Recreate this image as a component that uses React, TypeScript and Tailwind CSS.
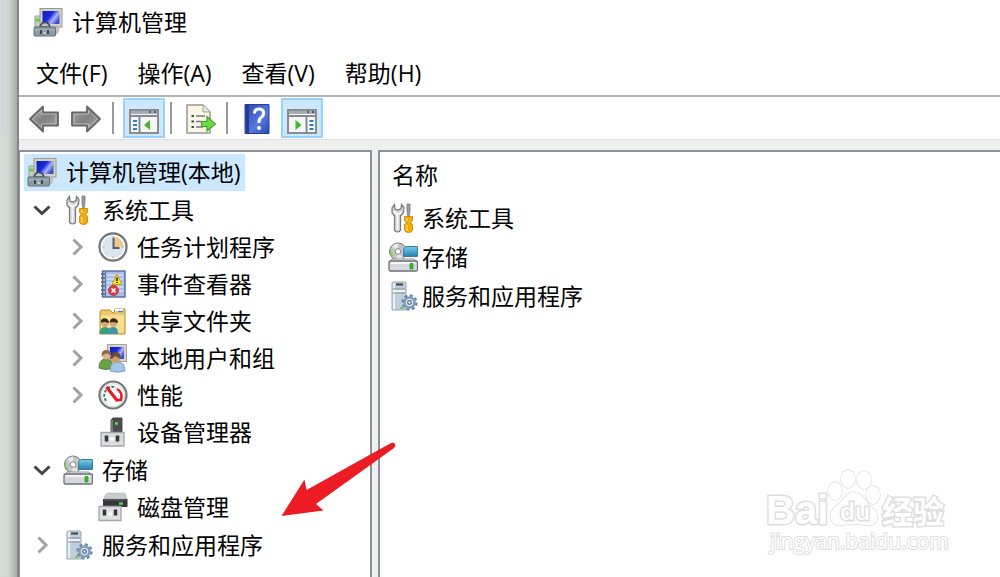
import type { ReactNode } from "react";

function Icon({ children, className = "w-[30px] h-[30px]" }: { children: ReactNode; className?: string }) {
	return (
		<svg viewBox="0 0 30 30" className={`shrink-0 ${className}`} aria-hidden="true">
			{children}
		</svg>
	);
}

function ComputerIcon() {
	return (
		<Icon>
			<defs>
				<linearGradient id="screen" x1="0" y1="0" x2="1" y2="0.6">
					<stop offset="0" stopColor="#0a1fb0" />
					<stop offset="0.5" stopColor="#1c2be0" />
					<stop offset="0.75" stopColor="#a9b8f2" />
					<stop offset="1" stopColor="#3c4ed6" />
				</linearGradient>
			</defs>
			<path d="M2 9h6v11H2z" fill="#c9ccca" stroke="#9b9f9e" />
			<path d="M2.500 13h4" stroke="#43d82e" strokeWidth="2.500" />
			<rect x="7" y="1.500" width="22" height="18.500" fill="#d6d1c4" stroke="#9d998e" />
			<rect x="9.500" y="4" width="17" height="13" fill="url(#screen)" />
			<path d="M20 20h7l-2 7h-5z" fill="#c2c0b8" />
			<path d="M7 20q1-4.500 5-4.500t5 4.500z" fill="#b9c4ca" stroke="#3e484d" strokeWidth="1.600" />
			<rect x="1" y="20" width="21.500" height="9" rx="1" fill="#8b9ba4" stroke="#63727a" />
			<path d="M1.500 23h20.500" stroke="#b0bec6" />
			<path d="M8 23v4M15 23v4" stroke="#333f45" strokeWidth="1.800" />
			<path d="M10.500 26h2.500" stroke="#d3dde2" strokeWidth="1.500" />
		</Icon>
	);
}

function ToolsIcon() {
	return (
		<Icon>
			<g transform="translate(2 0)">
				<path
					d="M4.500 1.500 5 6l3 1 3-1.500.500-4 2.500 3-.500 5-3 3.500v14q-.500 2-3 2t-3-2V13L2 10V5z"
					fill="#d5d6d7"
					stroke="#75777a"
					strokeWidth="1.200"
				/>
				<path d="M3.500 8.500l4 3 4-2M7.500 12v15" stroke="#f8f8f8" strokeWidth="1.800" fill="none" />
				<path d="M17 1h3v7l-1 6h-1l-1-6z" fill="#9b9da0" stroke="#686a6c" strokeWidth=".7" />
				<path d="M14.500 13.500h8v4l-2 2 2 2v6q-1 2-4 2t-4-2v-6l2-2-2-2z" fill="#f2aa08" stroke="#c48208" strokeWidth=".8" />
				<path d="M17 15v3m0 4v6" stroke="#ffd95b" strokeWidth="1.500" />
			</g>
		</Icon>
	);
}

function ClockIcon() {
	return (
		<Icon>
			<circle cx="15" cy="15" r="13.500" fill="#dae6f0" stroke="#77797b" strokeWidth="2.400" />
			<circle cx="15" cy="15" r="11.500" fill="none" stroke="#fff" strokeWidth="1.500" />
			<path d="M15 15V4.500A10.500 10.500 0 0 1 25.500 15z" fill="#eacb82" />
			<path d="M15.500 6v10h6" fill="none" stroke="#52606d" strokeWidth="2" />
			<path d="M15 4v2M4.500 15h2M15 24v2M24 15h2M7.500 7.500l1 1M7.500 22.500l1-1M22.500 22.500l-1-1" stroke="#a5b1bb" />
		</Icon>
	);
}

function EventIcon() {
	return (
		<Icon>
			<rect x="4.500" y="2" width="22.500" height="26" fill="#a9bfe9" stroke="#4b619b" strokeWidth="1.300" />
			<path d="M9 6h16M9 10h16M9 14h16M9 18h16M9 22h16" stroke="#d6e2f8" strokeWidth="1.500" />
			<path d="M7.500 2v26" stroke="#5f73a5" />
			<path d="M3 5h4M3 9h4M3 13h4M3 17h4M3 21h4M3 25h4" stroke="#62676f" strokeWidth="1.600" />
			<path d="M19 5 24 15.500H14z" fill="#ffe51c" stroke="#c2a004" strokeWidth="1" />
			<path d="M19 8.500v3.500m0 1v1" stroke="#222" strokeWidth="1.600" />
			<circle cx="15.500" cy="21.500" r="5" fill="#dc3b45" stroke="#b8404b" />
			<path d="m13.500 19.500 4 4m0-4-4 4" stroke="#fff" strokeWidth="1.600" />
		</Icon>
	);
}

function SharedFolderIcon() {
	return (
		<Icon>
			<path d="M2 6q0-2 2-2h8l3 3h1l1-4h10v25H2z" fill="#ecc966" stroke="#b88d30" />
			<path d="M17 4h8" stroke="#fff" strokeWidth="2" />
			<path d="M20 5.500h5" stroke="#438ddd" strokeWidth="1.500" />
			<path d="M3 9h23v18H3z" fill="#f7df91" />
			<path d="M1.500 28q0-7 5.500-7t6 7z" fill="#35a177" />
			<path d="M9.500 28q0-7 5.500-7t5 7z" fill="#3f98ae" />
			<circle cx="7" cy="17.500" r="3.500" fill="#d8a67c" />
			<circle cx="15.500" cy="17.500" r="3.500" fill="#d8a67c" />
			<path d="M2.500 16.500q1-5 5.500-4 3 1 3 4.500l-4-1zM11.500 16.500q1-5 5.500-4 3 1 3 4.500l-5-1z" fill="#33251a" />
		</Icon>
	);
}

function UsersIcon() {
	return (
		<Icon>
			<rect x="9.500" y="1.500" width="19" height="17" fill="#d6d1c4" stroke="#aaa69b" />
			<rect x="12" y="4" width="14" height="12" fill="url(#screen)" />
			<path d="M1 25q0-9 7-9t7 9q-7 3-14 0z" fill="#68a348" stroke="#47792d" strokeWidth=".8" />
			<circle cx="8.500" cy="12" r="4.500" fill="#ddb184" />
			<path d="M3.500 13q0-7 5.500-6 5 1 4 6l-4-3z" fill="#8b6a45" />
			<path d="M12 28q0-9 7.500-9t7.500 9q-7 2.500-15 0z" fill="#a4c6e9" stroke="#6c94bd" strokeWidth=".8" />
			<circle cx="17.500" cy="15.500" r="4.500" fill="#d19b6b" />
			<path d="M13 16q-1-6 4.500-7 6 0 5 7l-5-3z" fill="#6b4c35" />
		</Icon>
	);
}

function PerformanceIcon() {
	return (
		<Icon>
			<circle cx="15" cy="15" r="13.500" fill="#fafafa" stroke="#747678" strokeWidth="2.200" />
			<circle cx="15" cy="15" r="11.500" fill="none" stroke="#d7dadb" />
			<path d="M8 21q-4-7 1-12 4-4 9-1" fill="none" stroke="#527966" strokeWidth="2" strokeDasharray="3 1.500" />
			<path d="M19 9q6 3 4 11h-4" fill="none" stroke="#df2028" strokeWidth="2.500" />
			<path d="m8.500 7 11 14" stroke="#e31820" strokeWidth="3" />
		</Icon>
	);
}

function DeviceIcon() {
	return (
		<Icon>
			<path d="m13 3 2-2h9v14H13z" fill="#4b4d50" stroke="#333" strokeWidth=".8" />
			<path d="M14 3v12" stroke="#85888b" strokeWidth="1.500" />
			<path d="M17 6.500h3" stroke="#42ed48" strokeWidth="2.500" />
			<path d="M3 15.500h23v13.500H3z" fill="#dadcdf" stroke="#a3a6aa" strokeWidth="1.300" />
			<path d="M8.500 18.500v6M19.500 18.500v6" stroke="#353637" strokeWidth="3.500" />
			<path d="M12 22h4" stroke="#fff" strokeWidth="3" />
		</Icon>
	);
}

function DiskIcon() {
	return (
		<Icon>
			<path d="m8 2 2-1h17l2 6H6z" fill="#c9ccce" stroke="#b2b5b8" strokeWidth=".6" />
			<path d="M5 7h24.500v8H5z" fill="#343638" />
			<path d="M6 8h22" stroke="#66696c" />
			<path d="M21 11.500h4" stroke="#3cdb42" strokeWidth="2.500" />
			<path d="M1 14.500h22v14H1z" fill="#dfe0e1" stroke="#a3a6aa" strokeWidth="1.300" />
			<path d="M6.500 17.500v6M17.500 17.500v6" stroke="#343638" strokeWidth="3.500" />
			<path d="M10 22h4" stroke="#fff" strokeWidth="3" />
		</Icon>
	);
}

function StorageIcon() {
	return (
		<Icon>
			<defs>
				<linearGradient id="drive" x1="0" y1="0" x2="0" y2="1">
					<stop stopColor="#77cdee" />
					<stop offset="1" stopColor="#237fae" />
				</linearGradient>
			</defs>
			<circle cx="10" cy="9.500" r="8.500" fill="#c3c5c6" stroke="#77797b" />
			<path d="m10 9.500-6-5q3-3 6-3zM10 9.500l5 7q-3 2-6 1z" fill="#e6e9ea" />
			<circle cx="10" cy="9.500" r="2.800" fill="#fff" stroke="#85888a" />
			<path d="M3 8q-1 4 2 6" stroke="#83d14d" fill="none" strokeWidth="1.500" />
			<path d="m18 4.500h11.500v10H15.500V7z" fill="url(#drive)" stroke="#417b99" />
			<path d="M4 17h22l3 4H1z" fill="#eeeef1" stroke="#808288" strokeWidth=".8" />
			<rect x="1" y="19" width="28.500" height="10" rx="1.500" fill="#d8d8df" stroke="#6e7078" strokeWidth="1.300" />
			<path d="M3 21h24" stroke="#fff" strokeWidth="1.500" />
			<path d="M22 21.500h3v5.500h-3z" fill="#39bd24" stroke="#247c1b" strokeWidth=".6" />
		</Icon>
	);
}

function ServicesIcon() {
	return (
		<Icon>
			<path d="M4 2q0-1 2-1h10q2 0 2 1v27H4z" fill="#bfcfdb" stroke="#9aabb7" />
			<path d="M6 2v26" stroke="#e9f2f7" strokeWidth="2" />
			<path d="M8 3.500h7" stroke="#34424c" strokeWidth="2" />
			<path d="M5 8h12M5 12h12" stroke="#82949f" />
			<path d="M5 10h12" stroke="#fff" strokeWidth="1.500" />
			<circle cx="21.500" cy="21.500" r="6.800" fill="none" stroke="#6d8ba8" strokeWidth="2.800" strokeDasharray="3 2.340" />
			<circle cx="21.500" cy="21.500" r="5" fill="#d8e7f2" stroke="#7d9dba" strokeWidth="2.500" />
			<circle cx="21.500" cy="21.500" r="1.800" fill="#fff" stroke="#536e86" strokeWidth="1.300" />
			<path d="M12 27h3" stroke="#6dcd45" strokeWidth="2" />
		</Icon>
	);
}

function Arrow({ flip = false }: { flip?: boolean }) {
	return (
		<Icon className={flip ? "w-[30px] h-[30px] rotate-180" : "w-[30px] h-[30px]"}>
			<defs>
				<linearGradient id="steel" x1="0" y1="0" x2="1" y2="1">
					<stop stopColor="#b4b4b4" />
					<stop offset=".5" stopColor="#818181" />
					<stop offset="1" stopColor="#a9a9a9" />
				</linearGradient>
			</defs>
			<path d="m1 15 13-12.500v6h15v13H14v6z" fill="url(#steel)" stroke="#666" strokeWidth="1.800" strokeLinejoin="round" />
			<path d="m3.500 15 9-8.500V10H27v10H12.500v3.500z" fill="none" stroke="#c1c1c1" strokeWidth=".8" />
		</Icon>
	);
}

function PanelIcon({ right = false }: { right?: boolean }) {
	return (
		<Icon>
			<path d="M1 3h28v23H1z" fill="#f5f6f6" stroke="#8a8c8e" strokeWidth="2" />
			<path d="M2 4h26v3H2z" fill="#a8adb3" />
			<path d="M20 5h2m3 0h2" stroke="#4e5c79" strokeWidth="2" />
			<path d="M1 9h28" stroke="#85898d" strokeWidth="2" />
			{right ? (
				<>
					<path d="M19.500 10v16" stroke="#7c8287" strokeWidth="1.800" />
					<path d="M22.500 14h4m-4 4h4m-4 4h4" stroke="#397bb5" strokeWidth="1.800" />
					<path d="m8.500 13 6 5-6 5z" fill="#44b52c" />
				</>
			) : (
				<>
					<path d="M10.500 10v16" stroke="#7c8287" strokeWidth="1.800" />
					<path d="M4 14h4m-4 4h4m-4 4h4" stroke="#397bb5" strokeWidth="1.800" />
					<path d="M21 13v10l-6-5z" fill="#44b52c" />
				</>
			)}
		</Icon>
	);
}

function ExportIcon() {
	return (
		<Icon>
			<path d="M1 1h16l7 7v21H1z" fill="#fbf7e5" stroke="#969693" strokeWidth="1.500" />
			<path d="M17 1v7h7" fill="#e3e3df" stroke="#a5a5a2" />
			<path d="M5.500 12h2.500m-2.500 5.500h2.500M5.500 23h2.500" stroke="#454457" strokeWidth="2.200" />
			<path d="M10 12h9m-9 5.500h6M10 23h7" stroke="#7d7491" strokeWidth="1.500" />
			<path d="M15.500 17.500H21v-5l8.500 7.500-8.500 7v-4.500h-5.500z" fill="#70d943" stroke="#3ca727" strokeWidth="1.200" />
		</Icon>
	);
}

function HelpIcon() {
	return (
		<Icon>
			<defs>
				<linearGradient id="help" x1="0" y1="0" x2="1" y2="1">
					<stop stopColor="#294aaf" />
					<stop offset=".6" stopColor="#5779df" />
					<stop offset="1" stopColor="#2846b2" />
				</linearGradient>
			</defs>
			<path d="M3 .5h24v29H3z" fill="url(#help)" stroke="#2a3c8c" />
			<path d="M5.500 1v28" stroke="#223a96" strokeWidth="3" />
			<path d="M12.500 9.500q0-4.500 4.500-4.500t4.500 4q0 3-2.500 4.500-2 1.500-2 4.500v1" fill="none" stroke="#fff" strokeWidth="3" />
			<circle cx="17" cy="24" r="2" fill="#fff" />
		</Icon>
	);
}

function Chevron({ open = false, label }: { open?: boolean; label: string }) {
	return (
		<button type="button" aria-label={label} aria-expanded={open} className="flex w-6 h-6 shrink-0 items-center justify-center">
			<svg viewBox="0 0 24 24" className="w-6 h-6" fill="none" strokeWidth="3">
				{open ? <path d="m4.500 8.500 7.500 7 7.500-7" stroke="#444" /> : <path d="m8.500 4.500 7.500 7.500-7.500 7.500" stroke="#a2a2a2" />}
			</svg>
		</button>
	);
}

const systemTools = [
	{ name: "任务计划程序", icon: <ClockIcon />, expandable: true },
	{ name: "事件查看器", icon: <EventIcon />, expandable: true },
	{ name: "共享文件夹", icon: <SharedFolderIcon />, expandable: true },
	{ name: "本地用户和组", icon: <UsersIcon />, expandable: true },
	{ name: "性能", icon: <PerformanceIcon />, expandable: true },
	{ name: "设备管理器", icon: <DeviceIcon />, expandable: false },
];

const storageItems = [{ name: "磁盘管理", icon: <DiskIcon />, expandable: false }];

function Children({ items }: { items: typeof systemTools }) {
	return (
		<ul>
			{items.map((item) => (
				<li key={item.name} className="flex h-[37px] items-center pb-0.5 pl-[45px]">
					{item.expandable ? <Chevron label={`展开${item.name}`} /> : <span className="w-6" />}
					<span className="ml-[9px]">{item.icon}</span>
					<button type="button" className="ml-[9px] whitespace-nowrap">{item.name}</button>
				</li>
			))}
		</ul>
	);
}

function Group({ name, icon, open = false, children }: { name: string; icon: ReactNode; open?: boolean; children?: ReactNode }) {
	return (
		<li>
			<div className="flex h-[37px] items-center pb-0.5 pl-2.5">
				<Chevron open={open} label={open ? `折叠${name}` : `展开${name}`} />
				<span className="ml-[9px]">{icon}</span>
				<button type="button" className="ml-[9px] whitespace-nowrap">{name}</button>
			</div>
			{children}
		</li>
	);
}

function ToolButton({ label, active = false, narrow = false, children }: { label: string; active?: boolean; narrow?: boolean; children: ReactNode }) {
	return (
		<button
			type="button"
			aria-label={label}
			className={`flex h-10 items-center justify-center ${narrow ? "w-10" : "w-[42px]"} ${active ? "border-2 border-[#99d1ff] bg-[#cce8ff] pt-2" : "pt-0.5"}`}
		>
			{children}
		</button>
	);
}

function Separator() {
	return <span className="ml-[5px] mr-[9px] h-8 w-0.5 bg-[#9a9a9a]" />;
}

function Watermark() {
	return (
		<svg
			viewBox="0 0 190 90"
			className="absolute bottom-5 right-[46px] h-[90px] w-[190px] pointer-events-none"
			fill="#fff"
			stroke="#dedede"
			strokeWidth="1.500"
			paintOrder="stroke"
		>
			<g fontFamily="'Liberation Sans', 'Noto Sans CJK SC', sans-serif" fontWeight="700" strokeWidth="3">
				<text x="2" y="57" fontSize="40">Bai</text>
				<text x="118" y="56" fontSize="31">经验</text>
			</g>
			<path d="M90 25q-5 0-10 6-4 5-9 9-6 6-4 12 3 8 12 6 11-2 22 0 10 2 12-6 1-7-5-12-5-4-8-9-5-6-10-6z" />
			<ellipse cx="71" cy="24" rx="7" ry="9" />
			<ellipse cx="84" cy="12" rx="7" ry="9" />
			<ellipse cx="100" cy="13" rx="7" ry="9" />
			<ellipse cx="109" cy="28" rx="7" ry="9" />
			<g fontFamily="'Open Sans', sans-serif">
				<text x="76" y="53" fontSize="24" fontWeight="600" strokeWidth="3">du</text>
				<text x="6" y="82" fontSize="21" strokeWidth="2">jingyan.baidu.com</text>
			</g>
		</svg>
	);
}

function App() {
	return (
		<div className="relative flex h-screen overflow-hidden bg-white font-['Open_Sans','Noto_Sans_CJK_SC',sans-serif] text-[23px] leading-8 text-black">
			<div className="w-[17px] shrink-0 bg-linear-to-r from-[#d5dfda] via-[#cdd6d0] to-[#a4ada6]">
				<div className="h-[132px] w-[3px] border-r border-[#bfdbe6]" />
			</div>
			<div className="flex min-w-0 flex-1 flex-col border-l-2 border-[#858585]">
				<header className="flex h-11 items-center gap-[9px] pl-3.5">
					<ComputerIcon />
					<h1>计算机管理</h1>
				</header>
				<nav className="flex h-[51px] items-center gap-[30px] pl-[17px] pt-1.5">
					<button type="button">文件(F)</button>
					<button type="button">操作(A)</button>
					<button type="button">查看(V)</button>
					<button type="button">帮助(H)</button>
				</nav>
				<div className="flex h-11 items-center border-t-2 border-[#b5b5b5] pl-1">
					<ToolButton label="后退"><Arrow /></ToolButton>
					<ToolButton label="前进"><Arrow flip /></ToolButton>
					<Separator />
					<ToolButton label="显示/隐藏控制台树" active><PanelIcon /></ToolButton>
					<Separator />
					<ToolButton label="导出列表" narrow><ExportIcon /></ToolButton>
					<Separator />
					<ToolButton label="帮助" narrow><HelpIcon /></ToolButton>
					<span className="w-1" />
					<ToolButton label="显示/隐藏操作窗格" active><PanelIcon right /></ToolButton>
				</div>
				<main className="flex min-h-0 flex-1 gap-1.5 border-t border-[#dedede] bg-[#efefef] pt-2.5">
					<aside className="w-[353px] shrink-0 border-2 border-b-0 border-l border-[#8b909a] bg-white pt-0.5">
						<ul className="flex flex-col gap-px">
							<li className="ml-1 flex h-[37px] w-[221px] items-center bg-[#cce8ff] pb-0.5 pl-[3px]">
								<ComputerIcon />
								<button type="button" className="ml-[9px] whitespace-nowrap">计算机管理(本地)</button>
							</li>
							<Group name="系统工具" icon={<ToolsIcon />} open>
								<Children items={systemTools} />
							</Group>
							<Group name="存储" icon={<StorageIcon />} open>
								<Children items={storageItems} />
							</Group>
							<Group name="服务和应用程序" icon={<ServicesIcon />} />
						</ul>
					</aside>
					<section className="min-w-0 flex-1 border-l-2 border-t-2 border-[#8b909a] bg-white pl-2">
						<table className="w-full border-collapse text-left">
							<thead>
								<tr className="h-[47px]">
									<th scope="col" className="p-0 pb-0.5 pl-1 font-normal">名称</th>
								</tr>
							</thead>
							<tbody>
								<tr className="h-[39px]">
									<td className="p-0 pb-0.5"><div className="flex items-center gap-1"><ToolsIcon />系统工具</div></td>
								</tr>
								<tr className="h-[39px]">
									<td className="p-0 pb-0.5"><div className="flex items-center gap-1"><StorageIcon />存储</div></td>
								</tr>
								<tr className="h-[39px]">
									<td className="p-0 pb-0.5"><div className="flex items-center gap-1"><ServicesIcon />服务和应用程序</div></td>
								</tr>
							</tbody>
						</table>
					</section>
				</main>
			</div>
			<svg viewBox="0 0 116 76" className="absolute left-[280px] top-[441px] h-[76px] w-[116px] pointer-events-none" aria-hidden="true">
				<path d="m1.500 75 23-36.500 2 10.500L111 2q3-1 4 1t-1 4L36 63l7.500 6.500z" fill="#ed1c24" />
			</svg>
			<Watermark />
		</div>
	);
}

export default App;
